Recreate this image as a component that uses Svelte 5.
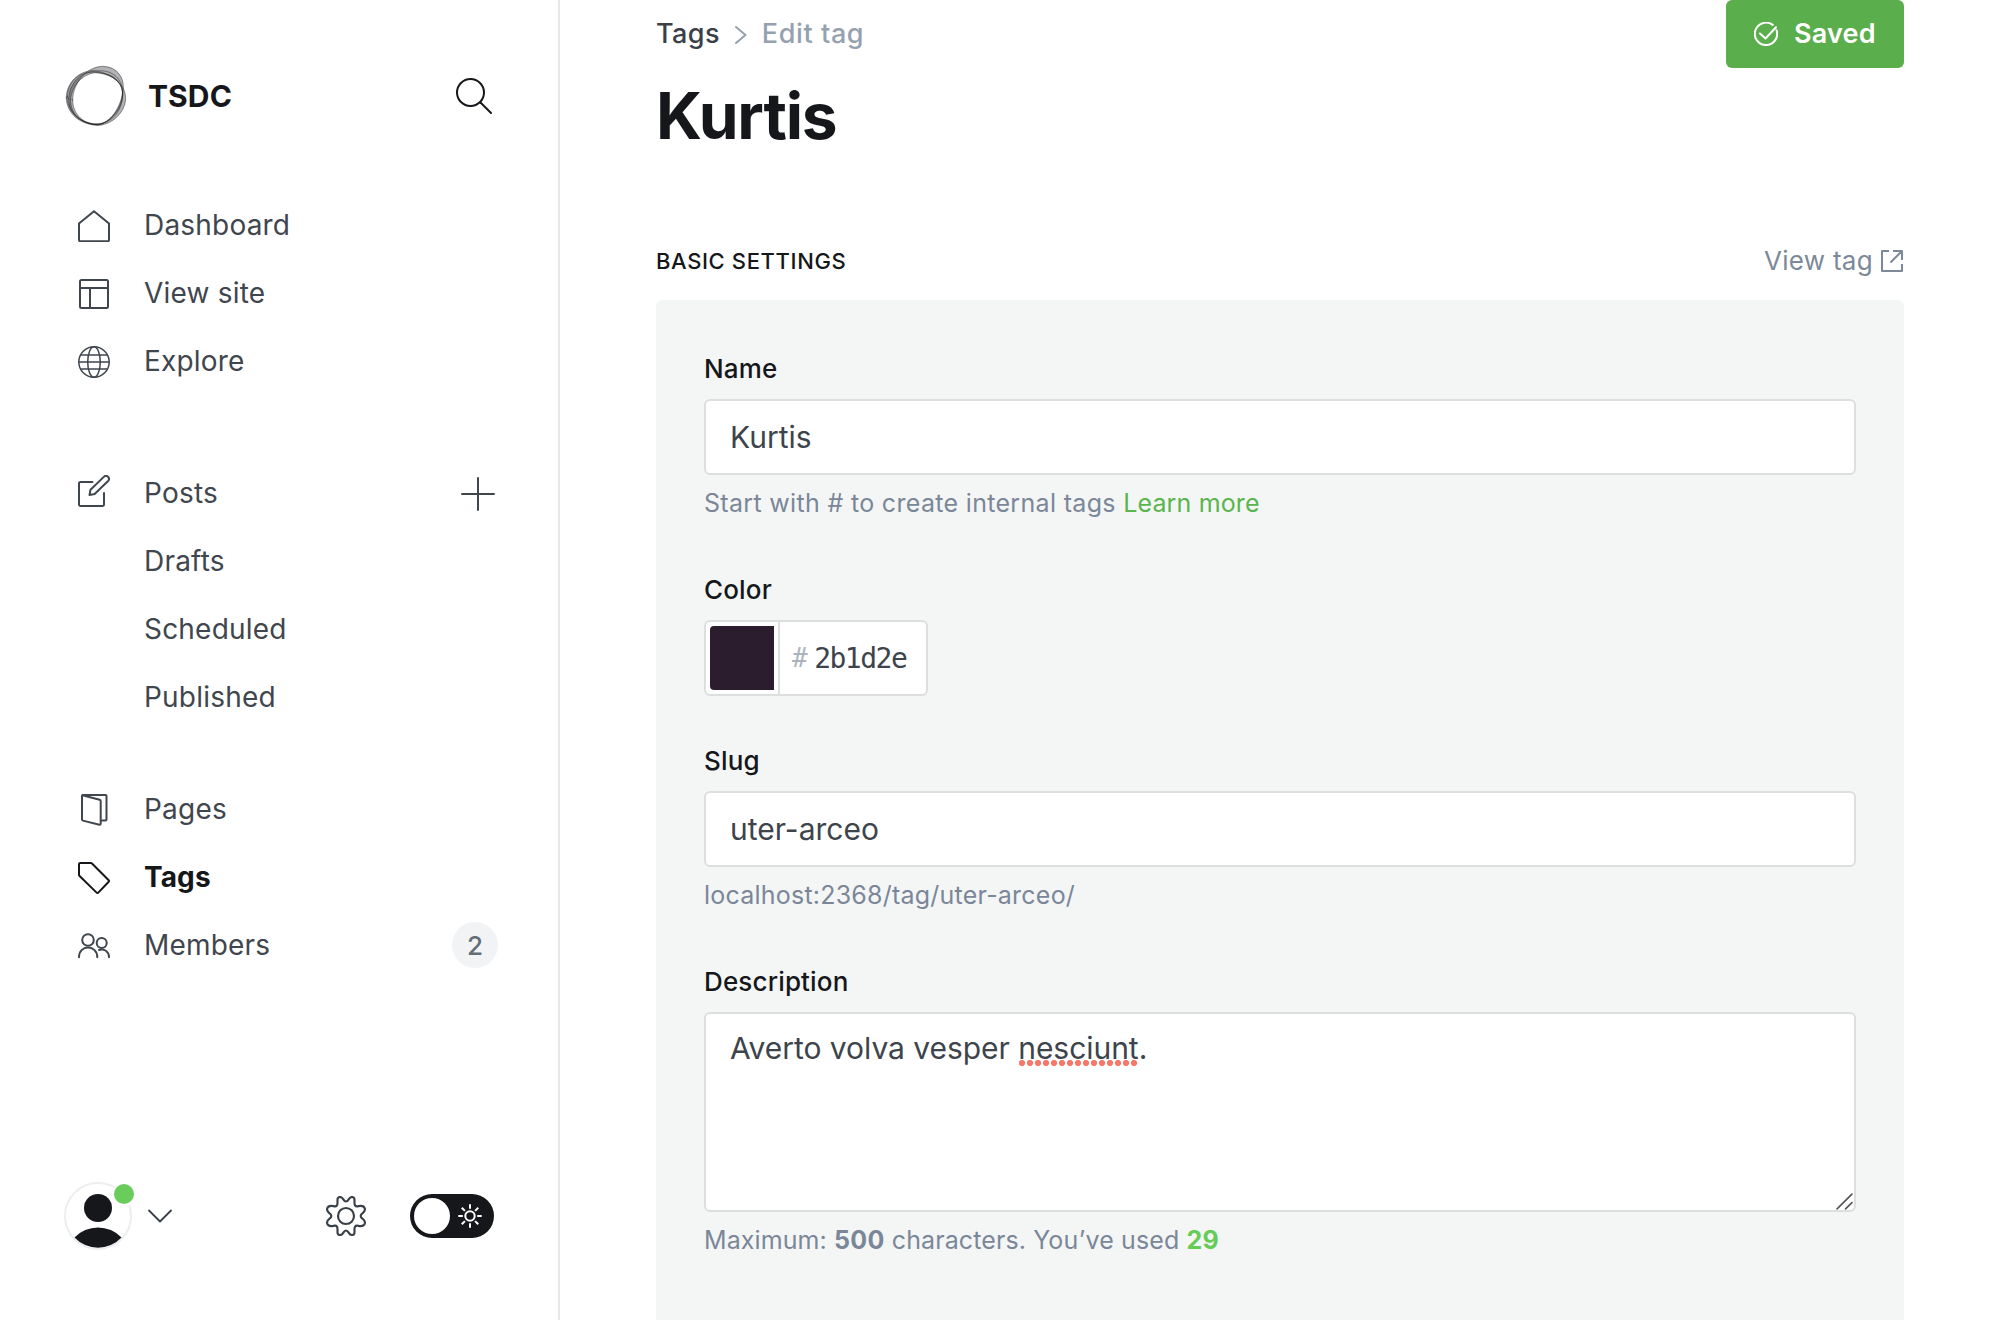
<script>
  const main = [
    { id: 'home', label: 'Dashboard' },
    { id: 'layout', label: 'View site' },
    { id: 'globe', label: 'Explore' }
  ];
  const states = ['Drafts', 'Scheduled', 'Published'];
  const manage = [
    { id: 'pages', label: 'Pages' },
    { id: 'tag', label: 'Tags', active: true },
    { id: 'members', label: 'Members', count: 2 }
  ];
  // Overlapping loops of the site logo; the gaps between them are shaded.
  const loops = [
    'M19 120C19 72 58 38 100 38C142 42 196 72 197 120C196 166 152 202 112 202C62 200 20 168 19 120Z',
    'M38 126C38 78 78 25 130 25C172 27 192 58 190 92C184 150 148 198 112 199C72 199 38 170 38 126Z',
    'M26 122C28 74 62 42 110 39C152 34 184 58 187 96C190 148 152 196 110 201C64 196 24 168 26 122Z',
    'M32 124C34 88 62 50 104 44C150 46 182 68 188 100C194 148 146 200 112 200C64 198 30 168 32 124Z',
    'M22 116C24 70 62 34 118 44C160 48 182 68 188 104C188 158 158 196 112 197C66 200 20 162 22 116Z'
  ];
  const rays = [0, 45, 90, 135, 180, 225, 270, 315];
</script>

{#snippet icon(id)}
  <svg class="icon {id}" viewBox="0 0 32 32">
    {#if id === 'home'}
      <path d="M1 13.500 16 1.200 31 13.500V30a1.200 1.200 0 0 1-1.200 1.200H2.200A1.200 1.200 0 0 1 1 30Z" />
    {:else if id === 'layout'}
      <rect x="2" y="2" width="28" height="28" rx="1.500" /><path d="M2 10h28M12 10v20" />
    {:else if id === 'globe'}
      <g class="fine"><circle cx="16" cy="16" r="15.200" /><ellipse cx="16" cy="16" rx="6.300" ry="15.200" /><path d="M1 16h30M3 9h26M3 23h26" /></g>
    {:else if id === 'edit'}
      <path d="M14.500 7H2.500A1.500 1.500 0 0 0 1 8.500v21A1.500 1.500 0 0 0 2.500 31h22a1.500 1.500 0 0 0 1.500-1.500V18" />
      <path d="M16.600 19l-5.100 1 1-5.200L25.800 1.900a2.800 2.800 0 0 1 4.300 4.100Z" />
    {:else if id === 'pages'}
      <path d="M23 26.500h4.500a1 1 0 0 0 1-1V2a1 1 0 0 0-1-1H4.500A1 1 0 0 0 4 2v23.500a1.200 1.200 0 0 0 .9 1.100l16.500 4.200a1.200 1.200 0 0 0 1.300-1.100V7a1.500 1.500 0 0 0-1-1.300L4.500 1.200" />
    {:else if id === 'tag'}
      <path d="M1 2.200A1.200 1.200 0 0 1 2.200 1h10.600a2 2 0 0 1 1.200.5L30.700 18.200a1.200 1.200 0 0 1 0 1.500L20.300 30.600a1.200 1.200 0 0 1-1.700 0L1.600 14a2 2 0 0 1-.6-1.200Z" />
    {:else if id === 'members'}
      <circle cx="10" cy="10" r="5.800" /><circle cx="23.700" cy="13" r="5" />
      <path d="M1 27.200c0-6 4-9.700 9-9.700s9.300 3.700 9.300 9.700M21 20c5-1.800 10 1.500 10 7.200" />
    {/if}
  </svg>
{/snippet}

<div class="app">
  <aside>
    <header class="brand">
      <svg class="logo" viewBox="15 21 183 183">
        {#each loops as loop, i}
          <path d="{loop}{loops[(i + 1) % loops.length]}" />
        {/each}
      </svg>
      <strong>TSDC</strong>
      <svg class="search" viewBox="0 0 36 36"><circle cx="14.500" cy="14.500" r="13.500" /><path d="M24.500 24.500 35 35" /></svg>
    </header>

    <nav>
      <ul>
        {#each main as item}
          <li>{@render icon(item.id)}<span>{item.label}</span></li>
        {/each}
      </ul>
      <ul class="posts">
        <li>{@render icon('edit')}<span>Posts</span><svg class="plus" viewBox="0 0 34 34"><path d="M17 1v32M1 17h32" /></svg></li>
        {#each states as s}
          <li class="sub"><span>{s}</span></li>
        {/each}
      </ul>
      <ul class="manage">
        {#each manage as item}
          <li class:active={item.active}>
            {@render icon(item.id)}<span>{item.label}</span>
            {#if item.count}<em>{item.count}</em>{/if}
          </li>
        {/each}
      </ul>
    </nav>

    <footer>
      <div class="avatar">
        <svg viewBox="0 0 68 68">
          <circle class="rim" cx="34" cy="34" r="33" />
          <circle cx="34" cy="26" r="14" />
          <path d="M10.500 55.500a32.500 32.500 0 0 1 47 0 32 32 0 0 1-47 0Z" />
        </svg>
        <i></i>
      </div>
      <svg class="chevron" viewBox="0 0 24 14"><path d="M1 1.500 12 12.500 23 1.500" /></svg>
      <svg class="gear" viewBox="0 0 24 24">
        <circle cx="12" cy="12" r="4.800" />
        <path d="M12 3.300 C13.800 3.300 13.400 .6 15.600 .6 C18.300 .7 16.300 4.400 17.500 5.700 Q18 6.400 18.900 6.200 C20.600 5.900 22.600 5.200 23.300 7.500 C23.900 10.300 20.800 10 20.800 12 C20.800 14 23.900 13.700 23.300 16.500 C22.600 18.800 20.600 18.100 18.900 17.800 Q18 17.600 17.500 18.300 C16.300 19.600 18.300 23.300 15.600 23.400 C13.400 23.400 13.800 20.700 12 20.700 C10.200 20.700 10.600 23.400 8.400 23.400 C5.700 23.300 7.700 19.600 6.500 18.300 Q6 17.600 5.100 17.800 C3.400 18.100 1.400 18.800 .7 16.500 C.1 13.700 3.200 14 3.200 12 C3.200 10 .1 10.300 .7 7.500 C1.400 5.200 3.400 5.900 5.100 6.200 Q6 6.400 6.500 5.700 C7.700 4.400 5.700 .7 8.400 .6 C10.600 .6 10.200 3.300 12 3.300Z" />
      </svg>
      <div class="toggle">
        <b></b>
        <svg viewBox="0 0 24 24"><circle cx="12" cy="12" r="4.700" />{#each rays as a}<path d="M12 .3v4.500" transform="rotate({a} 12 12)" />{/each}</svg>
      </div>
    </footer>
  </aside>

  <main>
    <div class="top">
      <div>
        <div class="crumbs"><span>Tags</span><svg viewBox="0 0 12 18"><path d="M1 1l9.500 8L1 17" /></svg><span class="current">Edit tag</span></div>
        <h1>Kurtis</h1>
      </div>
      <button>
        <svg viewBox="0 0 24 24"><path d="M22.600 8.300A11.200 11.200 0 1 1 18.700 2.900M6 11.500l5.500 5L22 5.300" /></svg><span>Saved</span>
      </button>
    </div>

    <div class="section">
      <h4>Basic settings</h4>
      <a class="view" href="#view"><span>View tag</span><svg viewBox="0 0 24 24"><path d="M9 2H2v20h20v-7M13 2h9v9M22 2 10.500 13.500" /></svg></a>
    </div>

    <section class="panel">
      <div class="field">
        <label for="name">Name</label>
        <div class="input" id="name">Kurtis</div>
        <p>Start with # to create internal tags <a href="#more">Learn more</a></p>
      </div>
      <div class="field">
        <label for="color">Color</label>
        <div class="input color" id="color"><div class="well"><div class="swatch"></div></div><div class="hex"><span>#</span>2b1d2e</div></div>
      </div>
      <div class="field">
        <label for="slug">Slug</label>
        <div class="input" id="slug">uter-arceo</div>
        <p class="url">localhost:2368/tag/uter-arceo/</p>
      </div>
      <div class="field">
        <label for="description">Description</label>
        <div class="input area" id="description"><div>Averto volva vesper <span class="misspelt">nesciunt</span>.</div>
          <svg class="grip" viewBox="0 0 16 16"><path d="M1 15 15 1M9 15l6-6" /></svg>
        </div>
        <p class="counter">Maximum: <b>500</b> characters. You’ve used <b class="used">29</b></p>
      </div>
    </section>
  </main>
</div>

<style>
  :global(body) { overflow: hidden; background: #fff; }
  * { box-sizing: border-box; }
  svg { display: block; flex: none; fill: none; stroke: currentColor; stroke-width: 2; stroke-linecap: round; stroke-linejoin: round; }
  ul, h1, h4, p { margin: 0; padding: 0; list-style: none; }
  a { color: inherit; text-decoration: none; }
  .app { display: flex; width: 2000px; height: 1320px; overflow: hidden; font-family: Inter, sans-serif; color: #15171a; }

  aside { width: 560px; flex: none; border-right: 2px solid #e6e8ea; padding: 65px 64px 70px 65px; display: flex; flex-direction: column; }
  .brand { display: flex; align-items: center; height: 61px; padding-right: 2px; }
  .brand strong { font-size: 30px; font-weight: 700; margin-left: 22px; flex: 1; letter-spacing: .1px; }
  .logo { width: 61px; height: 61px; }
  .logo path { fill: #15171a; fill-opacity: .18; fill-rule: evenodd; stroke: #15171a; stroke-width: 1.800; stroke-opacity: .4; }
  .search { width: 36px; height: 36px; }
  nav { margin-top: 66px; color: #3f464d; flex: 1; }
  li { display: flex; align-items: center; height: 68px; padding-left: 13px; font-size: 28px; letter-spacing: .2px; }
  li span { margin: 0 0 2px 34px; flex: 1; }
  .icon { width: 32px; height: 32px; }
  .edit { margin-bottom: 6px; }
  .fine { stroke-width: 1.500; }
  .sub span { margin-left: 66px; }
  .posts { margin-top: 64px; }
  .manage { margin-top: 44px; }
  .plus { width: 34px; height: 34px; margin-right: -1px; }
  .active { font-weight: 700; color: #15171a; letter-spacing: .1px; }
  em { width: 46px; height: 46px; margin: 0 -4px 2px 0; border-radius: 50%; background: #f1f3f4; color: #626d79; font-style: normal; font-size: 26px; font-weight: 500; letter-spacing: 0; display: grid; place-items: center; }
  footer { display: flex; align-items: center; height: 68px; }
  .avatar { position: relative; width: 68px; height: 68px; margin-left: -1px; }
  .avatar svg { fill: #15171a; stroke: none; }
  .avatar .rim { fill: none; stroke: #ebeef0; stroke-width: 2; }
  .avatar i { position: absolute; top: 2px; left: 50px; width: 20px; height: 20px; border-radius: 50%; background: #6acd5b; box-shadow: 0 0 0 2px #fff; }
  .chevron { width: 24px; height: 14px; margin-left: 16px; color: #394047; stroke-width: 1.800; }
  .gear { width: 40px; height: 40px; margin-left: 154px; color: #394047; stroke-width: 1.300; }
  .toggle { width: 84px; height: 44px; margin-left: 44px; border-radius: 22px; background: #15171a; color: #fff; display: flex; align-items: center; padding: 0 12px 0 4px; justify-content: space-between; }
  .toggle b { width: 36px; height: 36px; border-radius: 50%; background: #fff; }
  .toggle svg { width: 24px; height: 24px; stroke-linecap: butt; }

  main { padding: 0 96px; flex: 1; display: flex; flex-direction: column; }
  .top { display: flex; justify-content: space-between; align-items: flex-start; height: 240px; }
  .crumbs { display: flex; align-items: center; height: 68px; font-size: 27px; font-weight: 500; letter-spacing: .4px; color: #394047; }
  .crumbs span { margin-bottom: 2px; }
  .crumbs svg { width: 12px; height: 18px; margin: 2px 15px 0 15px; color: #95a1af; }
  .crumbs .current { color: #95a1af; letter-spacing: .6px; }
  h1 { font-size: 64px; line-height: 80px; font-weight: 700; letter-spacing: -1.200px; margin-top: 8px; }
  button { display: flex; align-items: center; width: 178px; height: 68px; padding: 0 0 0 28px; gap: 16px; border: 0; border-radius: 6px; background: #5aae4b; color: #fff; font: 600 27px Inter, sans-serif; letter-spacing: .2px; }
  button span { margin-bottom: 2px; }
  button svg { width: 24px; height: 24px; }
  .section { display: flex; justify-content: space-between; align-items: center; height: 42px; margin-bottom: 18px; }
  h4 { font-size: 22px; font-weight: 500; letter-spacing: .620px; text-transform: uppercase; }
  .view { display: flex; align-items: center; gap: 7px; font-size: 26px; letter-spacing: .300px; color: #7b8999; }
  .view span { margin-bottom: 1px; }
  .view svg { width: 24px; height: 24px; stroke-linecap: butt; }
  .panel { flex: 1; background: #f4f6f6; border-radius: 6px 6px 0 0; padding: 48px; display: flex; flex-direction: column; gap: 44px; }
  .field { display: flex; flex-direction: column; align-items: stretch; }
  label { font-size: 26px; line-height: 42px; margin-bottom: 9px; font-weight: 500; letter-spacing: .150px; }
  .input { height: 76px; border: 2px solid #dddfdf; border-radius: 6px; background: #fff; padding: 0 24px; display: flex; align-items: center; font-size: 30px; color: #3d444b; }
  p { font-size: 25px; line-height: 30px; margin-top: 13px; height: 37px; letter-spacing: .320px; color: #7b8798; }
  p.url { letter-spacing: .220px; }
  p.counter { letter-spacing: .100px; }
  .counter b { letter-spacing: .3px; }
  p a { color: #5bb54d; letter-spacing: .150px; }
  .counter .used { color: #66cc55; }
  .color { width: 224px; padding: 0; align-items: stretch; }
  .well { width: 74px; padding: 4px; border-right: 2px solid #dddfdf; }
  .swatch { width: 64px; height: 64px; border-radius: 4px 0 0 4px; background: #2b1d2e; }
  .hex { display: flex; align-items: center; gap: 8px; padding-left: 12px; font-family: "DejaVu Sans Mono", monospace; font-size: 28px; letter-spacing: -1.500px; }
  .hex span { color: #abb4be; font-size: 26px; }
  .area { position: relative; height: 200px; align-items: flex-start; padding-top: 15px; line-height: 38px; letter-spacing: -.040px; }
  .misspelt { background: radial-gradient(circle at 4px 3px, #f8776b 2.800px, transparent 3.300px) 0 100% / 8px 6px repeat-x; }
  .grip { position: absolute; right: 1px; bottom: 0; width: 17px; height: 17px; color: #555; stroke-width: 1.500; }
</style>
